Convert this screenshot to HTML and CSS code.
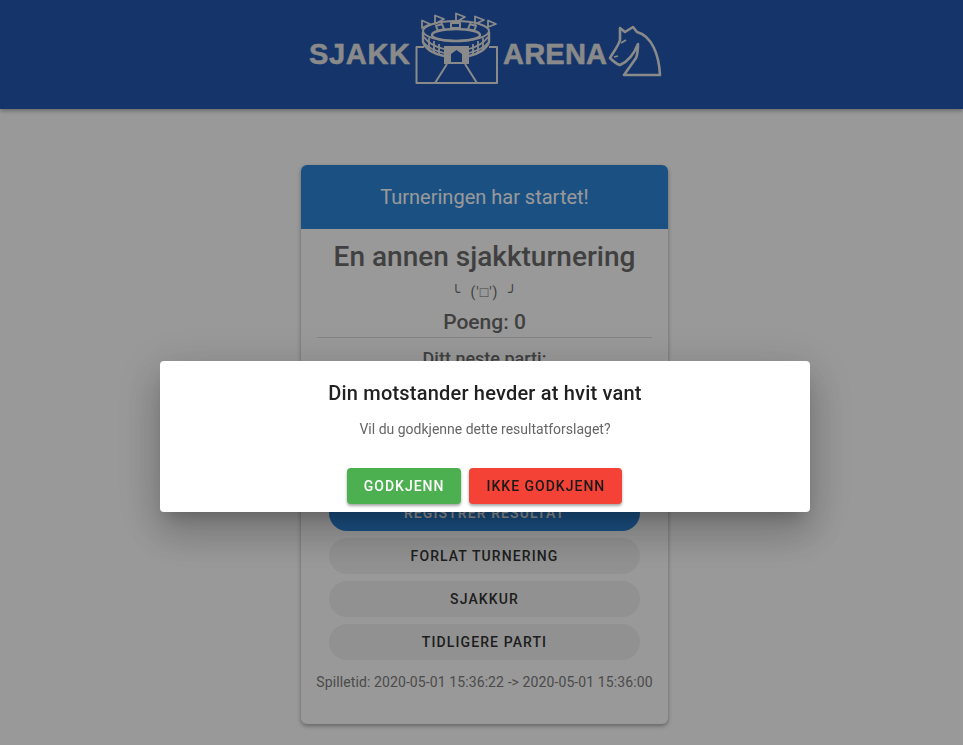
FILE: index.html
```html
<!DOCTYPE html>
<html lang="no">
<head>
    <meta charset="UTF-8">
    <meta name="viewport" content="width=device-width, initial-scale=1.0">
    <title>Sjakkarena</title>
    <link rel="stylesheet" href="styles.css">
</head>
<body>
<header class="topbar">
    <svg class="logo" width="360" height="90" viewBox="305 8 360 90" fill="none" stroke="#e6e6e6" stroke-width="2" stroke-linejoin="round">
        <text class="logo-text" x="309" y="64" textLength="101">SJAKK</text>
        <text class="logo-text" x="503" y="64" textLength="104">ARENA</text>
        <!-- stadion -->
        <path d="M424 47H416.500V83H497V47H489"/>
        <path d="M447 64L435 83M465 64L477 83"/>
        <path class="solid" fill-rule="evenodd" stroke="none" d="M444 46H469V64H444ZM451 62H462V54L456.500 50L451 54Z"/>
        <ellipse cx="456" cy="31" rx="33" ry="10"/>
        <ellipse cx="456" cy="35" rx="24" ry="6" stroke-width="2.400"/>
        <path stroke-width="2.400" d="M423 32V42C425 49 434 54 444 56M489 32V42C487 49 478 54 469 56"/>
        <path stroke-width="1.800" d="M424 37C428 43 436 47 444 49M488 37C484 43 476 47 469 49"/>
        <path stroke-width="1.800" d="M423 42C428 48 436 51 444 53M489 42C484 48 476 51 469 53"/>
        <path stroke-width="1.800" d="M429 38V50M434 41V53M439 44V55M483 38V50M478 41V53M473 44V55"/>
        <path stroke-width="2" d="M436 26L442 24L444 29L438 31ZM451 23H460V28H451ZM470 24L476 26L474 31L468 29Z"/>
        <path stroke-width="1.800" d="M422 28V20.500L430 24ZM435 24V15.500L444 19ZM456 22V13.500L465 17ZM475 24V16.500L484 20ZM488 27V20.500L496 24Z"/>
        <!-- springer -->
        <path stroke-width="2.600" d="M620 28L625 32L633 27L637 32C652 36 659 55 660 75H624L636 58C638 53 638 48 638 44C634 54 627 62 620 65C616 64 613 61 610 58C613 52 618 47 620 40Z"/>
        <path stroke-width="1.800" d="M621 43L626 40M614 57L618 56"/>
    </svg>
</header>

<main class="page">
    <section class="card">
        <div class="card-head">Turneringen har startet!</div>
        <div class="card-body">
            <h1 class="title">En annen sjakkturnering</h1>
            <p class="face">╰ ('□') ╯</p>
            <h2 class="points">Poeng: 0</h2>
            <hr class="rule">
            <h3 class="next">Ditt neste parti:</h3>
            <div class="next-space"></div>
            <button class="pill primary">Registrer resultat</button>
            <button class="pill">Forlat turnering</button>
            <button class="pill">Sjakkur</button>
            <button class="pill">Tidligere parti</button>
            <p class="playtime">Spilletid: 2020-05-01 15:36:22 -&gt; 2020-05-01 15:36:00</p>
        </div>
    </section>
</main>

<div class="overlay">
    <div class="dialog">
        <h2 class="dialog-title">Din motstander hevder at hvit vant</h2>
        <p class="dialog-text">Vil du godkjenne dette resultatforslaget?</p>
        <div class="dialog-actions">
            <button class="action accept">Godkjenn</button>
            <button class="action reject">Ikke godkjenn</button>
        </div>
    </div>
</div>
</body>
</html>
```
FILE: styles.css
```css
* {
    box-sizing: border-box;
}
html, body {
    height: 100%;
}
body {
    margin: 0;
    background-color: #fff;
    font-family: Roboto, "Noto Sans CJK JP", sans-serif;
    overflow: hidden;
}
.topbar {
    display: flex;
    justify-content: center;
    height: 109px;
    padding-left: 7px;
    background-color: #2359b1;
    box-shadow: 0 2px 4px rgba(0, 0, 0, 0.3);
}
.logo {
    display: block;
    margin-top: 8px;
}
.logo .solid {
    fill: #e6e6e6;
}
.logo-text {
    font-family: "Liberation Sans", Arial, sans-serif;
    font-size: 29px;
    font-weight: 700;
    fill: #e6e6e6;
    stroke: #e6e6e6;
    stroke-width: 0.5;
}
.page {
    display: flex;
    justify-content: center;
    padding: 56px 0 0 6px;
}
.card {
    width: 367px;
    height: 559px;
    flex: none;
    background-color: #fff;
    border-radius: 6px;
    box-shadow: 0 2px 4px rgba(0, 0, 0, 0.35);
    overflow: hidden;
}
.card-head {
    height: 64px;
    line-height: 64px;
    text-align: center;
    font-size: 20px;
    color: #fff;
    background-color: #2d85da;
}
.card-body {
    display: flex;
    flex-direction: column;
    align-items: center;
    padding: 0 16px;
}
.title {
    margin: 10px 0 0;
    font-size: 28px;
    line-height: 36px;
    font-weight: 500;
    color: #6c6c6c;
}
.face {
    margin: 7px 0 0;
    font-family: Roboto, "Liberation Mono", monospace;
    font-size: 14px;
    line-height: 20px;
    letter-spacing: 1px;
    word-spacing: 5px;
    color: #6c6c6c;
    white-space: pre;
}
.points {
    margin: 7px 0 0;
    font-size: 21px;
    line-height: 26px;
    font-weight: 500;
    color: #6c6c6c;
}
.rule {
    width: 100%;
    margin: 2px 0 0;
    border: 0;
    border-top: 1px solid #ddd;
}
.next {
    margin: 9px 0 0;
    font-size: 18px;
    line-height: 24px;
    font-weight: 500;
    color: #6c6c6c;
}
.next-space {
    height: 124px;
}
.pill {
    flex: none;
    width: 311px;
    height: 36px;
    margin-bottom: 7px;
    border: 0;
    border-radius: 18px;
    background-color: #f2f2f2;
    color: #333;
    font-family: inherit;
    font-size: 14px;
    font-weight: 500;
    letter-spacing: 1.1px;
    text-transform: uppercase;
}
.pill.primary {
    background-color: #2d85da;
    color: #fff;
}
.playtime {
    margin: 5px 0 0;
    font-size: 14px;
    line-height: 20px;
    letter-spacing: 0.1px;
    color: #7d7d7d;
    white-space: nowrap;
}
.overlay {
    position: fixed;
    inset: 0;
    display: flex;
    justify-content: center;
    align-items: flex-start;
    padding: 361px 0 0 7px;
    background-color: rgba(0, 0, 0, 0.4);
}
.dialog {
    width: 650px;
    height: 151px;
    padding-top: 20px;
    background-color: #fff;
    border-radius: 4px;
    box-shadow: 0 11px 15px -7px rgba(0, 0, 0, 0.2), 0 24px 38px 3px rgba(0, 0, 0, 0.14), 0 9px 46px 8px rgba(0, 0, 0, 0.12);
    text-align: center;
}
.dialog-title {
    margin: 0;
    font-size: 20px;
    line-height: 24px;
    font-weight: 500;
    letter-spacing: 0.2px;
    color: #212121;
}
.dialog-text {
    margin: 14px 0 0;
    font-size: 14px;
    line-height: 20px;
    color: #666;
}
.dialog-actions {
    display: flex;
    justify-content: center;
    gap: 8px;
    margin-top: 29px;
    padding-right: 1px;
}
.action {
    height: 36px;
    padding: 0 17px;
    border: 0;
    border-radius: 4px;
    font-family: inherit;
    font-size: 14px;
    font-weight: 500;
    letter-spacing: 1px;
    text-transform: uppercase;
    box-shadow: 0 2px 3px rgba(0, 0, 0, 0.35);
}
.accept {
    background-color: #4caf50;
    color: #fff;
}
.reject {
    background-color: #f44336;
    color: #1a1a1a;
}
```
